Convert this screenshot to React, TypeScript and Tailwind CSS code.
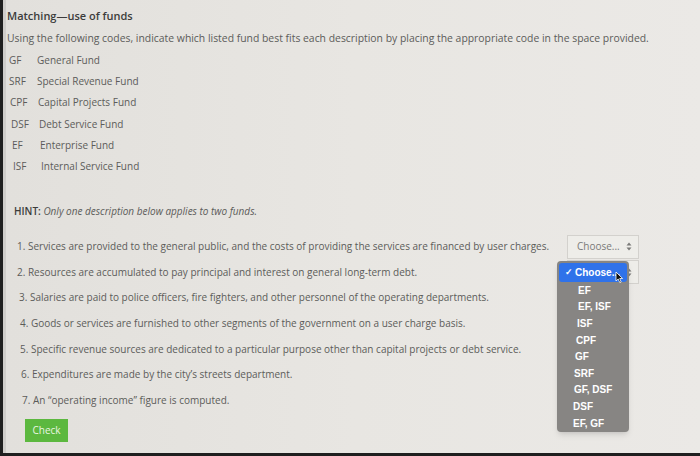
import React from 'react';

const funds: [string, string, string][] = [
  ['GF', 'General Fund', 'pl-[3px]'],
  ['SRF', 'Special Revenue Fund', 'pl-[3px]'],
  ['CPF', 'Capital Projects Fund', 'pl-[4px]'],
  ['DSF', 'Debt Service Fund', 'pl-[5px]'],
  ['EF', 'Enterprise Fund', 'pl-[6px]'],
  ['ISF', 'Internal Service Fund', 'pl-[7px]'],
];

const items: [string, string][] = [
  ['1. Services are provided to the general public, and the costs of providing the services are financed by user charges.', 'pl-[11px]'],
  ['2. Resources are accumulated to pay principal and interest on general long-term debt.', 'pl-[11px]'],
  ['3. Salaries are paid to police officers, fire fighters, and other personnel of the operating departments.', 'pl-[13px]'],
  ['4. Goods or services are furnished to other segments of the government on a user charge basis.', 'pl-[14px]'],
  ['5. Specific revenue sources are dedicated to a particular purpose other than capital projects or debt service.', 'pl-[14px]'],
  ['6. Expenditures are made by the city\u2019s streets department.', 'pl-[15px]'],
  ['7. An \u201coperating income\u201d figure is computed.', 'pl-[16px]'],
];

const options: [string, string][] = [
  ['EF', 'pl-[19px]'],
  ['EF, ISF', 'pl-[19px]'],
  ['ISF', 'pl-[18px]'],
  ['CPF', 'pl-[17px]'],
  ['GF', 'pl-[16px]'],
  ['SRF', 'pl-[15px]'],
  ['GF, DSF', 'pl-[15px]'],
  ['DSF', 'pl-[14px]'],
  ['EF, GF', 'pl-[14px]'],
];

const SelectBox: React.FC<{ label?: boolean }> = ({ label = true }) => (
  <div className="flex h-[24px] w-[72px] items-center justify-between border border-[#d3d1cd] bg-[#eeede9] pl-[9px] pr-[6px] text-[10px] text-[#7a7a78]">
    <span>{label ? 'Choose...' : ''}</span>
    <svg width="6" height="9" viewBox="0 0 6 9">
      <path d="M3 0.5 L5.5 3.5 H0.5 Z M3 8.5 L5.5 5.5 H0.5 Z" fill="#7a7a78" />
    </svg>
  </div>
);

const Dropdown: React.FC = () => (
  <div className="absolute left-[557px] top-[261px] w-[72px] rounded-[4px] bg-[#878583] p-[2px] pb-[1px] text-[10px] font-bold text-white shadow-md [font-family:'Liberation_Sans',Arial,sans-serif]">
    <div className="relative flex h-[19px] items-center rounded-[3px] bg-[#2f72ea] pl-[6px]">
      <span className="mr-[2px] text-[9px]">✓</span>
      <span>Choose...</span>
      <svg className="absolute left-[56px] top-[8px]" width="9" height="13" viewBox="0 0 9 13">
        <path d="M1 1 L1 10 L3.2 8 L4.8 11.6 L6.2 11 L4.7 7.5 L7.6 7.5 Z" fill="#111" stroke="#fff" strokeWidth="0.8" />
      </svg>
    </div>
    {options.map(([o, pl]) => (
      <div key={o} className={`flex h-[16.6px] items-center ${pl}`}>
        {o}
      </div>
    ))}
  </div>
);

export default function App() {
  return (
    <div className="relative h-[456px] w-[700px] overflow-hidden bg-[#1f1f1f] [font-family:'Open_Sans',sans-serif]">
      <div className="ml-[3px] h-[453px] border-l-[3px] border-[#cfcdca] bg-linear-to-r from-[#e2e0dc] via-[#e8e6e2] to-[#ebe9e6] text-[#5c5c5a]">
        <div className="pl-[1px] pt-[8px]">
          <div className="text-[11px] font-semibold leading-[16px] text-[#3c3c3b]">Matching—use of funds</div>
          <div className="mt-[7px] text-[10.4px] leading-[15px]">
            Using the following codes, indicate which listed fund best fits each description by placing the appropriate code in the space provided.
          </div>
        </div>
        <div className="mt-[7px] flex flex-col gap-[6.2px] text-[10px] leading-[15px]">
          {funds.map(([c, n, pl]) => (
            <div key={c} className={`flex ${pl}`}>
              <span className="w-[28px] shrink-0">{c}</span>
              <span>{n}</span>
            </div>
          ))}
        </div>
        <div className="mt-[30px] pl-[8px] text-[10px] leading-[15px]">
          <span className="font-semibold text-[#3c3c3b]">HINT: </span>
          <span className="italic">Only one description below applies to two funds.</span>
        </div>
        <div className="relative mt-[15px]">
          {items.map(([t, pl], i) => (
            <div key={i} className={`flex h-[25.6px] items-center justify-between pr-[61px] text-[10px] ${pl}`}>
              <span>{t}</span>
              {i < 2 && <SelectBox label={i === 0} />}
            </div>
          ))}
        </div>
        <button className="ml-[19px] mt-[6px] flex h-[23px] w-[43px] items-center justify-center bg-[#5cb83f] text-[10px] text-[#eaf6e2]">
          Check
        </button>
      </div>
      <Dropdown />
    </div>
  );
}
